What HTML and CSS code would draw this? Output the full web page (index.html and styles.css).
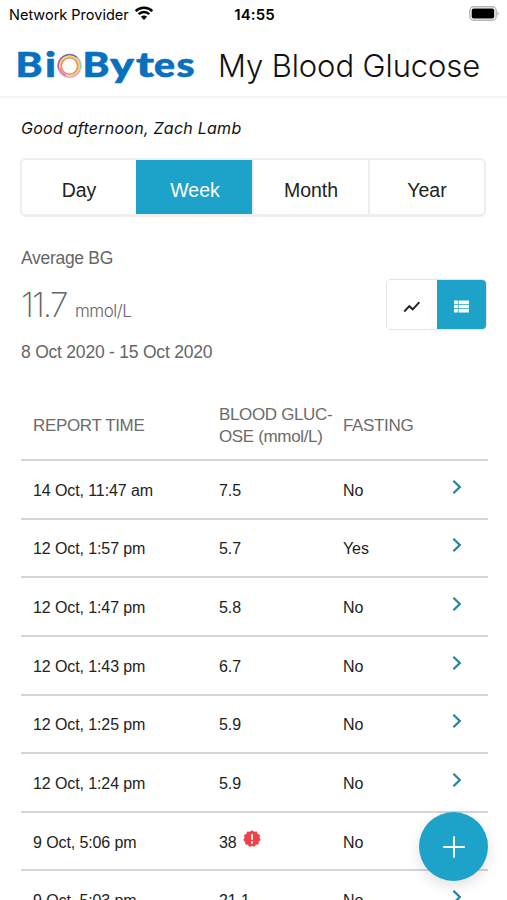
FILE: index.html
```html
<!DOCTYPE html>
<html lang="en">
<head>
  <meta charset="UTF-8" />
  <meta name="viewport" content="width=device-width, initial-scale=1" />
  <title>BioBytes - My Blood Glucose</title>
  <link rel="stylesheet" href="styles.css">
</head>
<body>
  <div class="status-bar">
    <div class="network">
      <span>Network Provider</span>
      <svg width="20" height="14" viewBox="0 0 20 14">
        <path d="M1.7 5.2a11.8 11.8 0 0 1 16.6 0M4.7 8.2a7.5 7.5 0 0 1 10.6 0" fill="none" stroke="#000" stroke-width="2.5"/>
        <path d="M10 14 6.9 10.8a4.4 4.4 0 0 1 6.2 0z"/>
      </svg>
    </div>
    <div class="clock">14:55</div>
    <svg class="battery" width="31" height="15" viewBox="0 0 31 15">
      <rect x=".8" y=".8" width="26.4" height="13.4" rx="4" fill="#fff" stroke="#b5b5b5" stroke-width="1.4"/>
      <rect x="2.7" y="2.5" width="22.5" height="10" rx="2"/>
      <path d="M28.5 5.2q2.6 2.3 0 4.6z" fill="#b5b5b5"/>
    </svg>
  </div>

  <header>
    <svg class="logo" width="182" height="56" viewBox="0 -8 182 56">
      <g class="logo-text">
        <text x="-0.5" y="31" textLength="27" lengthAdjust="spacingAndGlyphs">B</text>
        <text x="29" y="31" textLength="11" lengthAdjust="spacingAndGlyphs">i</text>
        <text x="66.5" y="31" textLength="27" lengthAdjust="spacingAndGlyphs">B</text>
        <text x="94" y="31" textLength="24" lengthAdjust="spacingAndGlyphs">y</text>
        <text x="120" y="31" textLength="18" lengthAdjust="spacingAndGlyphs">t</text>
        <text x="138" y="31" textLength="21" lengthAdjust="spacingAndGlyphs">e</text>
        <text x="160.5" y="31" textLength="18" lengthAdjust="spacingAndGlyphs">s</text>
      </g>
      <g fill="none" stroke-width="1.6">
        <circle cx="53.5" cy="20" r="11.2" stroke="#d9a8d4"/>
        <path d="M43 16.5a11 11 0 0 1 18-5" stroke="#5f6fb5"/>
        <path d="M61 11.5a11 11 0 0 1 3 12" stroke="#a6cfa6"/>
        <path d="M43 23.5a11 11 0 0 1 2-11" stroke="#c95aa5"/>
        <circle cx="53.5" cy="20" r="9.7" stroke="#f3d56b"/>
        <path d="M44 22.5a9.7 9.7 0 0 0 6 7" stroke="#e17cb6"/>
        <circle cx="53.5" cy="20" r="8.2" stroke="#ee8a62"/>
      </g>
    </svg>
    <h1>My Blood Glucose</h1>
  </header>

  <main>
    <p class="greeting">Good afternoon, Zach Lamb</p>

    <div class="tabs">
      <button>Day</button>
      <button class="active">Week</button>
      <button>Month</button>
      <button>Year</button>
    </div>

    <section class="summary">
      <div>
        <div class="label">Average BG</div>
        <div class="average"><span class="value">11.7</span><span class="unit">mmol/L</span></div>
        <div class="range">8 Oct 2020 - 15 Oct 2020</div>
      </div>
      <div class="view-toggle">
        <button aria-label="Chart">
          <svg width="18" height="12" viewBox="0 0 18 12"><path d="M1.3 10.5 6.3 5.2 9.7 8.3 16.4 1.2" fill="none" stroke="#222" stroke-width="1.9"/></svg>
        </button>
        <button class="active" aria-label="List">
          <svg width="15" height="13" viewBox="0 0 15 13" fill="#fff"><path d="M0 .5h3.8v3.4H0zM4.6.5H15v3.4H4.6zM0 4.8h3.8v3.4H0zM4.6 4.8H15v3.4H4.6zM0 9.1h3.8v3.4H0zM4.6 9.1H15v3.4H4.6z"/></svg>
        </button>
      </div>
    </section>

    <table>
      <thead>
        <tr><th class="time">Report time</th><th class="glucose">Blood gluc-<br>ose <span>(mmol/L)</span></th><th class="fasting">Fasting</th><th></th></tr>
      </thead>
      <tbody id="reports"></tbody>
    </table>
  </main>

  <button class="add" aria-label="Add">
    <svg width="24" height="24" viewBox="0 0 24 24"><path d="M12 1.2v21.6M1.2 12h21.6" stroke="#fff" stroke-width="1.9"/></svg>
  </button>

  <script src="script.js"></script>
</body>
</html>
```

FILE: styles.css
```css
* {
  box-sizing: border-box;
}
body {
  font-family: "Liberation Sans", Arial, sans-serif;
  background: #fff;
  color: #222;
  margin: 0;
  height: 900px;
  overflow: hidden;
}
button {
  font-family: inherit;
  color: inherit;
  background: #fff;
  border: 0;
  padding: 0;
}
svg {
  display: block;
}
.status-bar {
  display: grid;
  grid-template-columns: 1fr auto 1fr;
  align-items: center;
  height: 28px;
  padding: 0 7px 0 9px;
  color: #000;
  font-family: Inter, sans-serif;
}
.network {
  display: flex;
  align-items: center;
  gap: 5px;
  font-size: 14.5px;
}
.network svg {
  margin-top: -2px;
}
.clock {
  font-size: 15px;
  font-weight: 600;
  letter-spacing: 0.1px;
}
.battery {
  justify-self: end;
  margin-top: -2px;
}
header {
  display: flex;
  align-items: center;
  height: 70px;
  padding: 7px 0 0 16px;
  border-bottom: 2px solid #f5f5f5;
}
.logo-text {
  font-family: Lato, sans-serif;
  font-weight: 900;
  font-size: 34px;
  fill: #0870bf;
  stroke: #0870bf;
  stroke-width: 0.6;
  stroke-linejoin: round;
}
h1 {
  margin: 0 0 0 20px;
  font-family: Inter, sans-serif;
  font-size: 31px;
  font-weight: 300;
  letter-spacing: -0.1px;
  white-space: nowrap;
  color: #111;
}
main {
  padding: 0 20px;
}
.greeting {
  margin: 20px 0 19px;
  padding-left: 1px;
  font-family: Inter, sans-serif;
  font-size: 16px;
  line-height: 21px;
  font-style: italic;
  letter-spacing: 0.25px;
  color: #111;
}
.tabs {
  display: flex;
  width: 466px;
  height: 59px;
  border: 2px solid #eee;
  border-bottom-width: 3px;
  border-radius: 6px;
  overflow: hidden;
}
.tabs button {
  flex: 1;
  padding-top: 6px;
  font-size: 19.5px;
}
.tabs button + button {
  border-left: 2px solid #eee;
}
.tabs .active,
.view-toggle .active {
  background: #1da2ca;
  color: #fff;
}
.tabs .active {
  border-color: #1da2ca !important;
}
.summary {
  display: flex;
  justify-content: space-between;
  height: 167px;
  padding-left: 1px;
  color: #666;
}
.label {
  margin-top: 30px;
  font-size: 17.5px;
  line-height: 22px;
  letter-spacing: -0.3px;
}
.average {
  margin-top: 14px;
  line-height: 44px;
  font-family: Inter, sans-serif;
  display: flex;
  align-items: baseline;
}
.value {
  width: 54px;
  font-size: 34px;
  font-weight: 200;
  letter-spacing: -2px;
}
.unit {
  font-size: 17px;
  font-weight: 300;
  letter-spacing: -0.5px;
}
.range {
  margin-top: 8px;
  font-size: 17.5px;
  line-height: 22px;
  letter-spacing: -0.22px;
  white-space: nowrap;
}
.view-toggle {
  display: flex;
  width: 101px;
  height: 51px;
  margin-top: 62px;
  border: 1px solid #e4e4e4;
  border-radius: 5px;
  overflow: hidden;
}
.view-toggle button {
  flex: 1;
  display: flex;
  align-items: center;
  justify-content: center;
  padding-top: 4px;
}
table {
  width: 467px;
  margin-left: 1px;
  table-layout: fixed;
  border-collapse: collapse;
}
th,
td {
  padding: 0;
  text-align: left;
  border-bottom: 2px solid #d6d6d6;
}
th {
  height: 76px;
  padding-top: 9px;
  color: #6b6b6b;
  font-size: 17px;
  line-height: 22px;
  font-weight: normal;
  letter-spacing: -0.35px;
  text-transform: uppercase;
  white-space: nowrap;
}
th span {
  text-transform: none;
}
.time {
  width: 198px;
  padding-left: 12px;
}
.glucose {
  width: 124px;
}
.fasting {
  width: 109px;
}
td {
  height: 58.65px;
  padding-top: 3px;
  font-size: 16px;
  letter-spacing: -0.1px;
}
.chevron {
  margin-top: -8px;
}
.warning {
  display: inline-block;
  margin-left: 6px;
}
td:has(.warning) {
  padding-top: 1px;
  padding-bottom: 1px;
}
.add {
  position: fixed;
  left: 419px;
  top: 812px;
  width: 69px;
  height: 69px;
  border-radius: 50%;
  display: flex;
  align-items: center;
  justify-content: center;
  background: #1da2ca;
  box-shadow: 0 5px 14px rgba(0, 0, 0, 0.12);
}
```

FILE: script.js
```javascript
const reports = [
  ["14 Oct, 11:47 am", "7.5", "No"],
  ["12 Oct, 1:57 pm", "5.7", "Yes"],
  ["12 Oct, 1:47 pm", "5.8", "No"],
  ["12 Oct, 1:43 pm", "6.7", "No"],
  ["12 Oct, 1:25 pm", "5.9", "No"],
  ["12 Oct, 1:24 pm", "5.9", "No"],
  ["9 Oct, 5:06 pm", "38", "No", true],
  ["9 Oct, 5:03 pm", "21.1", "No"]
];

const warning = `<svg class="warning" width="18" height="18" viewBox="0 0 18 18">
  <path d="M9 .3 11.2 1.7 13.8 1.5 14.8 3.9 17.1 5.2 16.5 7.7 17.7 10 15.8 11.8 15.5 14.4 12.9 14.8 11.2 16.9 9 15.8 6.5 16.9 4.9 14.8 2.3 14.4 2.1 11.8.3 10 1.5 7.7.9 5.2 3.2 3.9 4.2 1.5 6.8 1.7z" fill="#ee4248"/>
  <path d="M9 4.2v5.5M9 11.3v2.2" stroke="#fff" stroke-width="1.8"/>
</svg>`;

const chevron = `<svg class="chevron" width="10" height="16" viewBox="0 0 10 16">
  <path d="M1.4 1.7 7.8 8 1.4 14.3" fill="none" stroke="#28869f" stroke-width="2.3"/>
</svg>`;

document.getElementById("reports").innerHTML = reports.map(([time, value, fasting, high]) => `
  <tr>
    <td class="time">${time}</td>
    <td>${value}${high ? warning : ""}</td>
    <td>${fasting}</td>
    <td>${chevron}</td>
  </tr>`).join("");
```
